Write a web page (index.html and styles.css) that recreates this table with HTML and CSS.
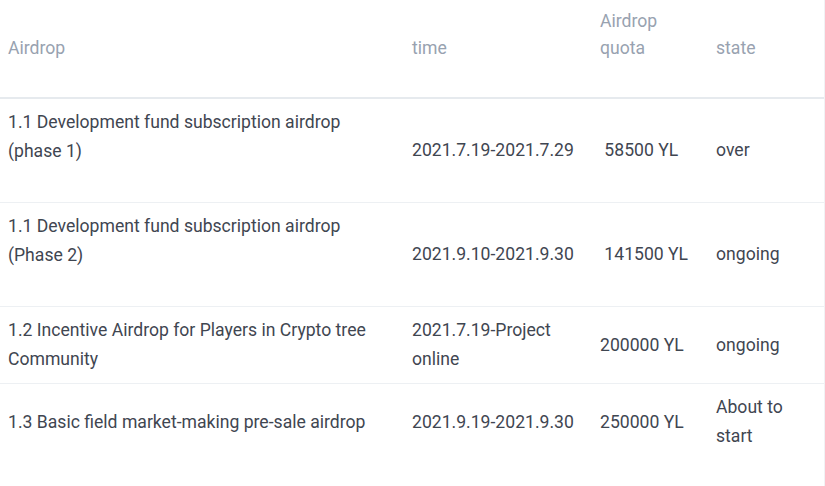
FILE: index.html
```html
<!DOCTYPE html>
<html lang="en">
<head>
<meta charset="utf-8">
<title>Airdrop</title>
<link rel="stylesheet" href="styles.css">
</head>
<body>
<div class="wrap">
  <table class="airdrops">
    <colgroup>
      <col class="c-name">
      <col class="c-time">
      <col class="c-quota">
      <col class="c-state">
    </colgroup>
    <thead>
      <tr>
        <th>Airdrop</th>
        <th>time</th>
        <th>Airdrop quota</th>
        <th>state</th>
      </tr>
    </thead>
    <tbody>
      <tr>
        <td><div class="desc">1.1 Development fund subscription airdrop (phase 1)</div></td>
        <td>2021.7.19-2021.7.29</td>
        <td>&nbsp;58500 YL</td>
        <td>over</td>
      </tr>
      <tr>
        <td><div class="desc">1.1 Development fund subscription airdrop (Phase 2)</div></td>
        <td>2021.9.10-2021.9.30</td>
        <td>&nbsp;141500 YL</td>
        <td>ongoing</td>
      </tr>
      <tr>
        <td>1.2 Incentive Airdrop for Players in Crypto tree Community</td>
        <td>2021.7.19-Project online</td>
        <td>200000 YL</td>
        <td>ongoing</td>
      </tr>
      <tr>
        <td>1.3 Basic field market-making pre-sale airdrop</td>
        <td>2021.9.19-2021.9.30</td>
        <td>250000 YL</td>
        <td>About to start</td>
      </tr>
    </tbody>
  </table>
</div>
</body>
</html>
```

FILE: styles.css
```css
html, body {
  margin: 0;
  padding: 0;
  background: #ffffff;
}

body {
  font-family: Roboto, "Liberation Sans", sans-serif;
  font-size: 17.6px;
  color: #3f4651;
}

.wrap {
  width: 824px;
  min-height: 486px;
  border-right: 1px solid #f1f2f4;
}

.airdrops {
  width: 824px;
  border-collapse: collapse;
  table-layout: fixed;
}

.c-name { width: 404px; }
.c-time { width: 188px; }
.c-quota { width: 116px; }
.c-state { width: 116px; }

.airdrops th {
  text-align: left;
  font-weight: 400;
  color: #98a2b0;
  line-height: 27px;
  padding: 8px 8px 35px;
  vertical-align: bottom;
  border-bottom: 2px solid #e6eaee;
}

.airdrops td {
  line-height: 29px;
  padding: 9px 8px;
  vertical-align: middle;
  border-bottom: 1px solid #edf0f3;
}

.airdrops tbody tr:last-child td {
  border-bottom: none;
}

.desc {
  padding-bottom: 27px;
}
```
